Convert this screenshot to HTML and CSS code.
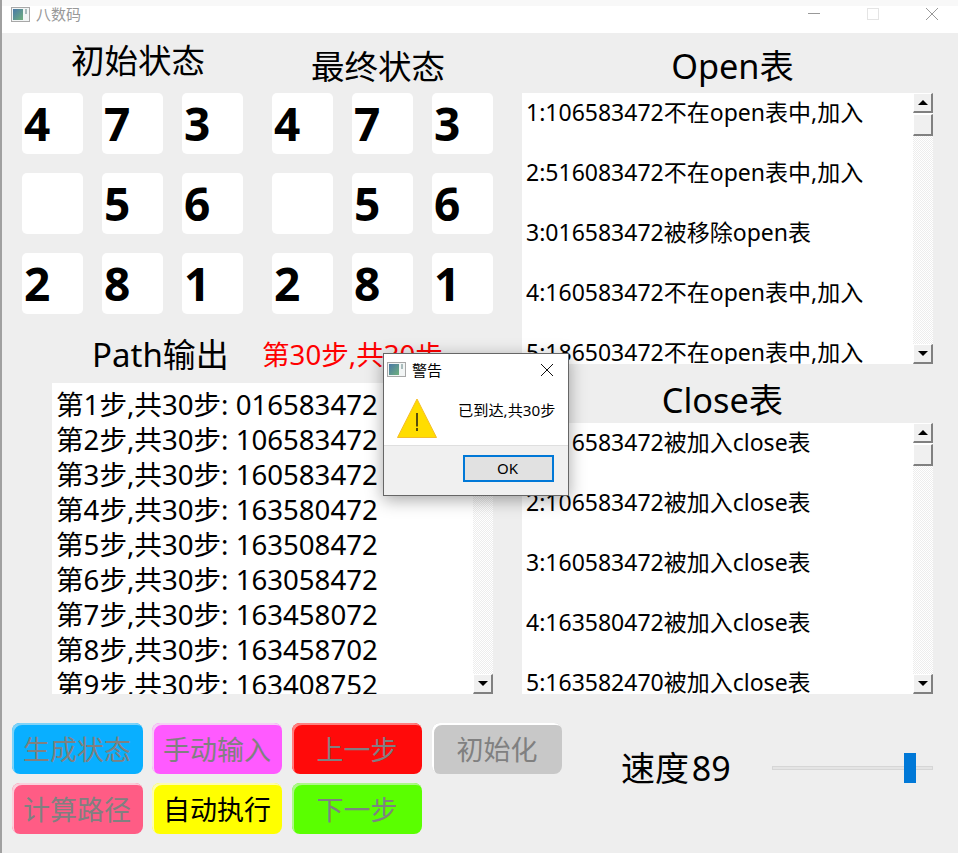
FILE: index.html
```html
<!DOCTYPE html>
<html lang="zh-CN">
<head>
  <meta charset="utf-8">
  <title>八数码</title>
  <link rel="stylesheet" href="styles.css">
</head>
<body>
<div class="window">
  <div class="topstrip"></div>
  <div class="titlebar">
    <svg class="appicon" width="19" height="15" viewBox="0 0 19 15"><defs><linearGradient id="appfill" x1="0" y1="0" x2="1" y2="1"><stop offset="0" stop-color="#4a78a8"/><stop offset="1" stop-color="#6fb07c"/></linearGradient></defs><rect x="0.500" y="0.500" width="18" height="14" fill="#f2f5f5" stroke="#a8a8a8"/><rect x="2" y="2" width="10" height="11" fill="url(#appfill)"/><rect x="14" y="2" width="2" height="5" fill="#a9bcbc"/></svg>
    <span class="apptitle">八数码</span>
    <div class="winctl">
      <svg width="14" height="14" viewBox="0 0 14 14"><path d="M1 6.500h12" stroke="#999" fill="none"/></svg>
      <svg width="14" height="14" viewBox="0 0 14 14"><rect x="1.500" y="1.500" width="11" height="11" stroke="#e4e4e4" fill="none"/></svg>
      <svg width="14" height="14" viewBox="0 0 14 14"><path d="M1 1l12 12M13 1L1 13" stroke="#999" fill="none"/></svg>
    </div>
  </div>

  <div class="main">
    <div class="leftcol">
      <div class="boards">
        <div class="board">
          <div class="heading heading-start">初始状态</div>
          <div class="cells">
            <div class="cell">4</div><div class="cell">7</div><div class="cell">3</div>
            <div class="cell"></div><div class="cell">5</div><div class="cell">6</div>
            <div class="cell">2</div><div class="cell">8</div><div class="cell">1</div>
          </div>
        </div>
        <div class="board">
          <div class="heading heading-end">最终状态</div>
          <div class="cells">
            <div class="cell">4</div><div class="cell">7</div><div class="cell">3</div>
            <div class="cell"></div><div class="cell">5</div><div class="cell">6</div>
            <div class="cell">2</div><div class="cell">8</div><div class="cell">1</div>
          </div>
        </div>
      </div>
      <div class="pathhead">
        <span class="pathlabel">Path输出</span>
        <span class="stepcount">第30步,共30步</span>
      </div>
      <div class="listbox pathbox">
        <div class="listtext pathtext">
          <div>第1步,共30步: 016583472</div>
          <div>第2步,共30步: 106583472</div>
          <div>第3步,共30步: 160583472</div>
          <div>第4步,共30步: 163580472</div>
          <div>第5步,共30步: 163508472</div>
          <div>第6步,共30步: 163058472</div>
          <div>第7步,共30步: 163458072</div>
          <div>第8步,共30步: 163458702</div>
          <div>第9步,共30步: 163408752</div>
        </div>
        <div class="scrollbar scrollbar-nothumb">
          <div class="sbtrack"></div>
          <div class="sbbtn"><i class="arrow-down"></i></div>
        </div>
      </div>
    </div>

    <div class="rightcol">
      <div class="heading heading-open">Open表</div>
      <div class="listbox openbox">
        <div class="listtext">
          <div class="row">1:106583472不在open表中,加入</div>
          <div class="row">2:516083472不在open表中,加入</div>
          <div class="row">3:016583472被移除open表</div>
          <div class="row">4:160583472不在open表中,加入</div>
          <div class="row">5:186503472不在open表中,加入</div>
        </div>
        <div class="scrollbar">
          <div class="sbbtn"><i class="arrow-up"></i></div>
          <div class="sbthumb"></div>
          <div class="sbtrack"></div>
          <div class="sbbtn"><i class="arrow-down"></i></div>
        </div>
      </div>
      <div class="heading heading-close">Close表</div>
      <div class="listbox openbox">
        <div class="listtext">
          <div class="row">1:016583472被加入close表</div>
          <div class="row">2:106583472被加入close表</div>
          <div class="row">3:160583472被加入close表</div>
          <div class="row">4:163580472被加入close表</div>
          <div class="row">5:163582470被加入close表</div>
        </div>
        <div class="scrollbar">
          <div class="sbbtn"><i class="arrow-up"></i></div>
          <div class="sbthumb"></div>
          <div class="sbtrack"></div>
          <div class="sbbtn"><i class="arrow-down"></i></div>
        </div>
      </div>
    </div>
  </div>

  <div class="bottom">
    <div class="buttons">
      <button class="btn btn-blue">生成状态</button>
      <button class="btn btn-pink">手动输入</button>
      <button class="btn btn-red">上一步</button>
      <button class="btn btn-gray">初始化</button>
      <button class="btn btn-rose">计算路径</button>
      <button class="btn btn-yellow">自动执行</button>
      <button class="btn btn-green">下一步</button>
    </div>
    <div class="speed">速度 89</div>
    <div class="slider"><div class="thumb"></div></div>
  </div>

  <div class="dialog">
    <div class="dlgtitle">
      <svg class="appicon" width="19" height="15" viewBox="0 0 19 15"><rect x="0.500" y="0.500" width="18" height="14" fill="#f2f5f5" stroke="#a8a8a8"/><rect x="2" y="2" width="10" height="11" fill="url(#appfill)"/><rect x="14" y="2" width="2" height="5" fill="#a9bcbc"/></svg>
      <span class="dlgname">警告</span>
      <svg class="dlgclose" width="14" height="14" viewBox="0 0 14 14"><path d="M1 1l12 12M13 1L1 13" stroke="#111" fill="none"/></svg>
    </div>
    <div class="dlgbody">
      <svg width="40" height="40" viewBox="0 0 40 40"><path d="M20 1L39.500 39.500H0.500z" fill="#ffdd00" stroke="#f4bd2a"/><path d="M20 15v13.500M20 30v3" stroke="#111" stroke-width="1.400" fill="none"/></svg>
      <span class="dlgmsg">已到达,共30步</span>
    </div>
    <div class="dlgfoot"><button class="okbtn">OK</button></div>
  </div>
</div>
</body>
</html>
```

FILE: styles.css
```css
html, body { margin: 0; padding: 0; }
body { font-family: "Noto Sans", "Noto Sans CJK SC", sans-serif; color: #000; overflow: hidden; }

.window { position: relative; width: 956px; height: 853px; border-left: 2px solid #a0a0a0; background: #eee; overflow: hidden; }
.topstrip { height: 6px; background: #f8f8f8; }

.titlebar { height: 27px; box-sizing: border-box; background: #fff; display: flex; align-items: flex-start; padding: 1px 0 0 9px; }
.appicon { flex: none; }
.apptitle { margin-left: 6px; font-size: 15px; line-height: 15px; color: #999; }
.winctl { margin-left: auto; display: flex; gap: 45px; padding-right: 19px; }

.main { display: grid; grid-template-columns: 520px 411px; }

.heading { height: 60px; display: flex; align-items: center; justify-content: center; font-size: 33.500px; box-sizing: border-box; }
.heading-start { padding-left: 11px; padding-bottom: 9px; }
.heading-end { padding-right: 9px; padding-top: 2px; }
.heading-open { padding-left: 10px; padding-top: 2px; font-size: 34.300px; }
.heading-close { height: 59px; padding-right: 10px; padding-top: 9px; font-size: 34.300px; }

.boards { display: flex; gap: 29px; padding-left: 20px; }
.board { width: 221px; }
.cells { display: grid; grid-template-columns: repeat(3, 61px); grid-auto-rows: 61px; gap: 19px; }
.cell { background: #fff; border-radius: 5px; padding-left: 2px; font-size: 46px; font-weight: 700; line-height: 61px; }

.pathhead { height: 69px; display: flex; align-items: center; padding-left: 90px; padding-top: 9px; box-sizing: border-box; }
.pathlabel { font-size: 33px; width: 170px; flex: none; }
.stepcount { font-size: 27.600px; color: #f00; white-space: nowrap; }

.listbox { display: flex; background: #fff; overflow: hidden; }
.pathbox { margin-left: 50px; width: 441px; height: 311px; }
.openbox { height: 271px; }
.listtext { flex: 1; overflow: hidden; padding-left: 4px; white-space: nowrap; font-size: 23px; }
.pathtext { font-size: 27.600px; line-height: 35px; padding-top: 4px; }
.row { height: 60px; line-height: 39px; }

.scrollbar { flex: none; width: 20px; display: flex; flex-direction: column; }
.sbtrack { flex: 1; background: repeating-conic-gradient(#ededed 0 25%, #fff 0 50%) 0 0 / 2px 2px; }
.sbbtn, .sbthumb { box-sizing: border-box; background: #f0f0f0; border: 1px solid; border-color: #fff #808080 #808080 #fff; border-width: 1px 2px 2px 1px; }
.sbbtn { height: 20px; flex: none; display: flex; align-items: center; justify-content: center; }
.sbthumb { height: 22px; flex: none; margin-top: 1px; }
.arrow-up { width: 0; height: 0; border: 5px solid transparent; border-top: 0; border-bottom: 5px solid #000; }
.arrow-down { width: 0; height: 0; border: 5px solid transparent; border-bottom: 0; border-top: 5px solid #000; }

.bottom { display: flex; align-items: flex-start; padding: 29px 0 0 10px; }
.buttons { display: grid; grid-template-columns: repeat(4, 130px); grid-auto-rows: 51px; column-gap: 10px; row-gap: 9px; }
.btn { border: 0; border-radius: 8px; padding: 0 0 1px; font: inherit; font-size: 27px; color: #808080; box-shadow: inset 2px 2px 0 var(--hi); }
.btn-blue { background: #09afff; --hi: #7fd3f8; width: 131px; padding-right: 1px; }
.btn-pink { background: #ff5aff; --hi: #f5d0f5; }
.btn-red { background: #ff0a0a; --hi: #ff8080; }
.btn-gray { background: #c8c8c8; --hi: #fff; }
.btn-rose { background: #ff5c85; --hi: #fad0dc; width: 131px; padding-right: 1px; }
.btn-yellow { background: #ff0; --hi: #fdfdb0; color: #000; }
.btn-green { background: #5aff00; --hi: #adf78a; }

.speed { margin-left: 59px; margin-top: 20px; width: 151px; font-size: 34px; line-height: 50px; word-spacing: -6px; white-space: nowrap; flex: none; }
.slider { position: relative; width: 161px; height: 4px; margin-top: 43px; box-sizing: border-box; background: #e4e4e4; border: 1px solid #d6d6d6; flex: none; }
.thumb { position: absolute; right: 16px; top: -14px; width: 12px; height: 30px; background: #0078d7; }

.dialog { position: absolute; left: 381px; top: 353px; width: 186px; height: 143px; box-sizing: border-box; border: 1px solid #666; background: #f0f0f0; box-shadow: 0 4px 16px rgba(0, 0, 0, .35); display: flex; flex-direction: column; }
.dlgtitle { height: 31px; background: #fff; display: flex; align-items: center; padding-left: 3px; flex: none; }
.dlgname { margin-left: 6px; font-size: 15px; }
.dlgclose { margin-left: auto; margin-right: 14px; }
.dlgbody { height: 61px; background: #fff; border-bottom: 1px solid #dfdfdf; display: flex; align-items: flex-start; padding: 13px 0 0 13px; box-sizing: border-box; flex: none; }
.dlgmsg { margin-left: 21px; margin-top: 0; font-size: 15.200px; }
.dlgfoot { flex: 1; display: flex; justify-content: flex-end; align-items: flex-start; padding: 9px 14px 0 0; }
.okbtn { width: 91px; height: 27px; box-sizing: border-box; border: 2px solid #0078d7; background: #e1e1e1; font: inherit; font-size: 15px; padding: 0 2px 2px 0; }
```
